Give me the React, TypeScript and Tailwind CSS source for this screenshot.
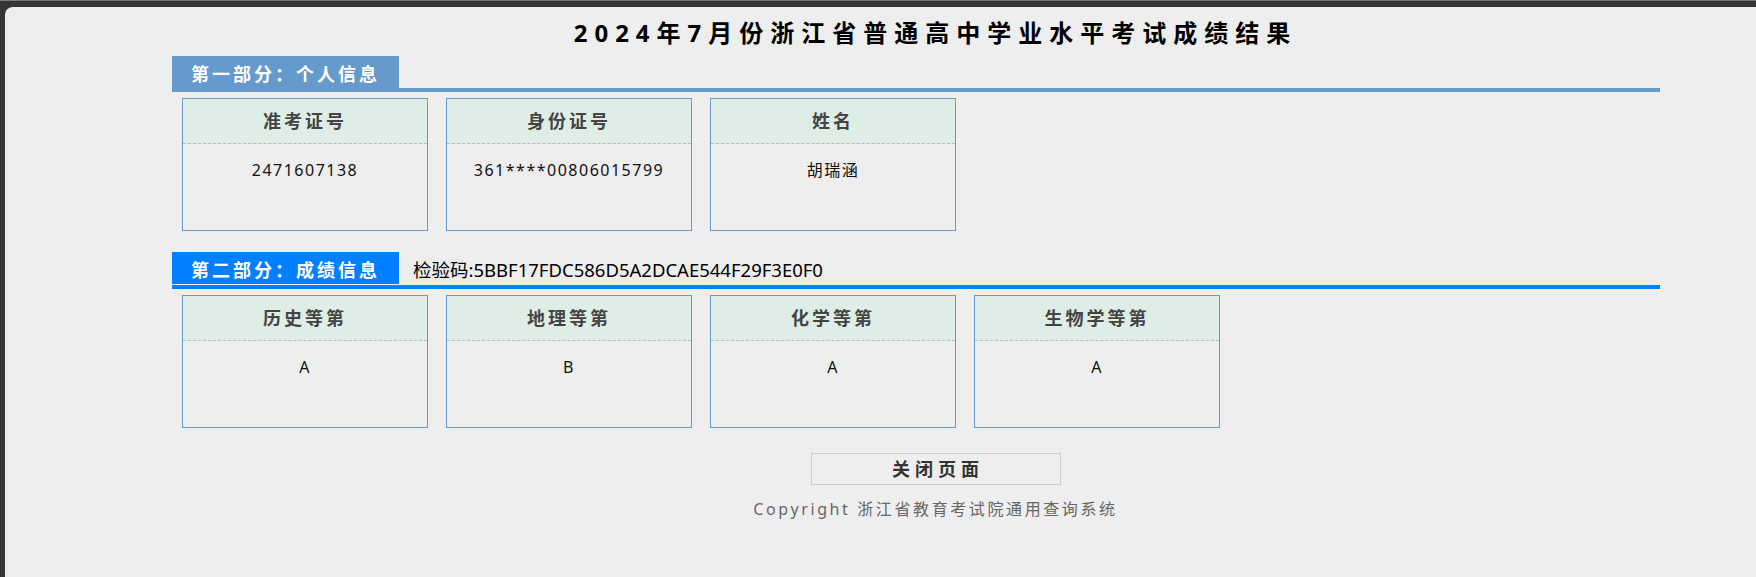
const font = "font-['Noto_Sans','Noto_Sans_CJK_SC',sans-serif]"

const personal = [
  { label: "准考证号", value: "2471607138" },
  { label: "身份证号", value: "361****00806015799" },
  { label: "姓名", value: "胡瑞涵" },
]

const grades = [
  { label: "历史等第", value: "A" },
  { label: "地理等第", value: "B" },
  { label: "化学等第", value: "A" },
  { label: "生物学等第", value: "A" },
]

function Card({ label, value }: { label: string; value: string }) {
  return (
    <div className="w-[246px] h-[133px] border border-[#6699cc] flex flex-col">
      <div className="h-[45px] bg-[#deede6] border-b border-dashed border-[#bbbbbb] flex items-center justify-center text-[18px] font-bold tracking-[3px] text-[#444444]">
        {label}
      </div>
      <div className="pt-[14px] text-center text-[16px] leading-[24px] tracking-[1.5px] text-[#111111]">{value}</div>
    </div>
  )
}

export default function App() {
  return (
    <div className={`${font} w-full h-[577px] overflow-hidden bg-[#353535] border-t border-[#777777] pt-[6px] pl-[5px]`}>
      <div className="w-[1861px] h-[600px] bg-[#eeeeee] rounded-tl-[8px]">
        <h1 className="pt-[8px] text-center text-[24px] leading-[36px] font-bold tracking-[7px] text-black">
          2024年7月份浙江省普通高中学业水平考试成绩结果
        </h1>

        {/* Part 1 */}
        <div className="ml-[167px] w-[1488px] mt-[5px]">
          <div className="border-b-4 border-[#6699cc] flex">
            <div className="h-[32px] w-[227px] bg-[#6699cc] pl-[19px] flex items-center pt-[4px] text-white text-[18px] font-bold tracking-[3px]">
              第一部分：个人信息
            </div>
          </div>
          <div className="flex gap-[18px] pl-[10px] mt-[6px]">
            {personal.map((c, i) => (
              <Card key={i} label={c.label} value={c.value} />
            ))}
          </div>
        </div>

        {/* Part 2 */}
        <div className="ml-[167px] w-[1488px] mt-[21px]">
          <div className="h-[37px] border-b-4 border-[#0080ff] pb-[1px] flex items-center">
            <div className="h-[32px] w-[227px] bg-[#0080ff] pl-[19px] flex items-center pt-[4px] text-white text-[18px] font-bold tracking-[3px]">
              第二部分：成绩信息
            </div>
            <span className="ml-[14px] pt-[3px] text-[18.5px] leading-[28px] text-black">检验码:5BBF17FDC586D5A2DCAE544F29F3E0F0</span>
          </div>
          <div className="flex gap-[18px] pl-[10px] mt-[6px]">
            {grades.map((c, i) => (
              <Card key={i} label={c.label} value={c.value} />
            ))}
          </div>
        </div>

        <div className="mt-[25px] flex justify-center">
          <button className="w-[250px] h-[32px] border border-[#cccccc] bg-[#eeeeee] pl-[5px] text-[18px] font-bold tracking-[5px] text-[#333333]">
            关闭页面
          </button>
        </div>
        <p className="mt-[12px] text-center text-[16px] leading-[24px] tracking-[2.6px] text-[#666666]">
          Copyright 浙江省教育考试院通用查询系统
        </p>
      </div>
    </div>
  )
}
